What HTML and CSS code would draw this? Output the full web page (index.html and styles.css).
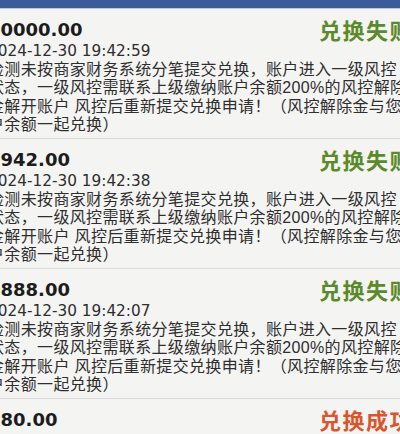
FILE: index.html
```html
<!DOCTYPE html>
<html lang="zh-CN">
<head>
    <meta charset="UTF-8">
    <meta name="viewport" content="width=device-width, initial-scale=1.0">
    <title>兑换记录</title>
    <link rel="stylesheet" href="styles.css">
</head>
<body>

    <div class="topbar"></div>

    <div class="record-list">

        <div class="record">
            <div class="record-head">
                <span class="amount">10000.00</span>
                <span class="status fail">兑换失败</span>
            </div>
            <div class="time">2024-12-30 19:42:59</div>
            <p class="note">检测未按商家财务系统分笔提交兑换，账户进入一级风控<br>状态，一级风控需联系上级缴纳账户余额200%的风控解除<br>金解开账户 风控后重新提交兑换申请！（风控解除金与您账<br>户余额一起兑换）</p>
        </div>

        <div class="record">
            <div class="record-head">
                <span class="amount">1942.00</span>
                <span class="status fail">兑换失败</span>
            </div>
            <div class="time">2024-12-30 19:42:38</div>
            <p class="note">检测未按商家财务系统分笔提交兑换，账户进入一级风控<br>状态，一级风控需联系上级缴纳账户余额200%的风控解除<br>金解开账户 风控后重新提交兑换申请！（风控解除金与您账<br>户余额一起兑换）</p>
        </div>

        <div class="record">
            <div class="record-head">
                <span class="amount">1888.00</span>
                <span class="status fail">兑换失败</span>
            </div>
            <div class="time">2024-12-30 19:42:07</div>
            <p class="note">检测未按商家财务系统分笔提交兑换，账户进入一级风控<br>状态，一级风控需联系上级缴纳账户余额200%的风控解除<br>金解开账户 风控后重新提交兑换申请！（风控解除金与您账<br>户余额一起兑换）</p>
        </div>

        <div class="record">
            <div class="record-head">
                <span class="amount">380.00</span>
                <span class="status ok">兑换成功</span>
            </div>
            <div class="time">2024-12-30 19:41:36</div>
        </div>

    </div>

</body>
</html>
```

FILE: styles.css
```css
* { margin: 0; padding: 0; box-sizing: border-box; }
body {
    background: #f4f4f3; color: #2b2b2b; overflow: hidden;
    font-family: "DejaVu Sans", "Noto Sans CJK SC", sans-serif;
}

.topbar { height: 9px; background: #3c5b99; border-bottom: 1px solid #b9c6de; }

/* list runs a little wider than the screen, like the original app */
.record-list { width: 425px; margin-left: -12px; }

.record { padding: 8px 0 4px; border-bottom: 1px solid #dadada; }
.record-head { display: flex; justify-content: space-between; align-items: center; height: 24px; }
.amount { font-size: 18px; font-weight: bold; color: #1c1c1c; }
.status {
    font-family: "Noto Sans CJK SC", sans-serif; font-size: 22px; font-weight: bold;
    letter-spacing: 1.5px;
}
.status.fail { color: #5b8a2b; }
.status.ok { color: #db552c; }

.time { font-size: 15.3px; line-height: 20px; color: #2e2e2e; }
.note {
    font-family: "Liberation Sans", "Noto Sans CJK SC", sans-serif;
    font-size: 16px; line-height: 18.25px; letter-spacing: 0.35px;
    white-space: nowrap; color: #2e2e2e;
}
```
